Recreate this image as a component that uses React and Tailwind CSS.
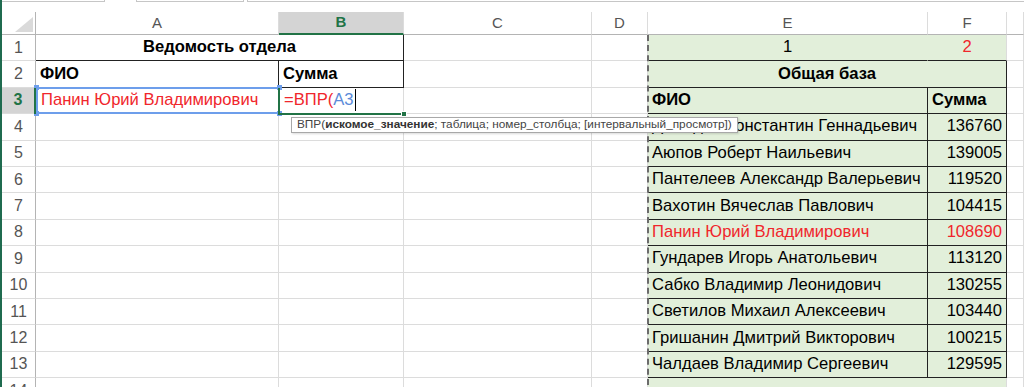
import React from 'react';

const cols = ['A', 'B', 'C', 'D', 'E', 'F', ''];

const base = [
    ['Демидов Константин Геннадьевич', '136760'],
    ['Аюпов Роберт Наильевич', '139005'],
    ['Пантелеев Александр Валерьевич', '119520'],
    ['Вахотин Вячеслав Павлович', '104415'],
    ['Панин Юрий Владимирович', '108690', true],
    ['Гундарев Игорь Анатольевич', '113120'],
    ['Сабко Владимир Леонидович', '130255'],
    ['Светилов Михаил Алексеевич', '103440'],
    ['Гришанин Дмитрий Викторович', '100215'],
    ['Чалдаев Владимир Сергеевич', '129595'],
];

// one spreadsheet cell; side colours are passed as full class names
const Cell = ({ children, r = 'border-r-[#dcdcdc]', b = 'border-b-[#dcdcdc]', className = '' }) => (
    <div className={`border-r border-b ${r} ${b} flex items-center whitespace-nowrap overflow-visible px-[4px] ${className}`}>
        {children}
    </div>
);

const RowHead = ({ n, active }) => (
    <div
        className={`flex items-center justify-center border-b border-b-[#dcdcdc] text-[16px] ${
            active
                ? 'bg-[#d4d4d4] border-r-2 border-r-[#217346] text-[#217346] font-bold'
                : 'bg-white border-r border-r-[#b4b4b4] text-[#555]'
        }`}
    >
        {n}
    </div>
);

const App = () => {
    const green = 'bg-[#e2efda]';
    const gR = 'border-r-[#e2efda]';
    const gB = 'border-b-[#e2efda]';
    const dR = 'border-r-[#222]';
    const dB = 'border-b-[#222]';

    return (
        <div className="relative flex w-[1024px] h-[387px] overflow-hidden bg-white text-black" style={{ fontFamily: '"Liberation Sans", Arial, sans-serif' }}>
            <div className="w-[2px] shrink-0 bg-[#1f6b4f]" />
            <div className="flex-1 flex flex-col">
                {/* formula bar remnants */}
                <div className="h-[12px] shrink-0 flex items-start">
                    <div className="w-[103px] h-[2px] border-b border-r border-[#c6c6c6]" />
                    <div className="w-[31px]" />
                    <div className="w-[108px] h-[2px] border-b border-x border-[#c6c6c6]" />
                    <div className="w-[3px]" />
                    <div className="flex-1 h-[2px] border-b border-l border-[#c6c6c6]" />
                </div>

                <div className="shrink-0 grid grid-cols-[34px_243px_125px_188px_56px_280px_79px_1fr] grid-rows-[23px_repeat(14,26.4px)] text-[16.6px]">
                    {/* header row */}
                    <div className="relative bg-white border-r border-b border-r-[#b4b4b4] border-b-[#b4b4b4]">
                        <svg className="absolute right-[2px] bottom-[2px]" width="18" height="15" viewBox="0 0 18 15">
                            <polygon points="18,0 18,15 0,15" fill="#dadada" />
                        </svg>
                    </div>
                    {cols.map((c) => (
                        <div
                            key={c || 'G'}
                            className={`flex items-center justify-center text-[15px] border-r border-r-[#dcdcdc] ${
                                c === 'B'
                                    ? 'bg-[#d4d4d4] border-b-2 border-b-[#217346] text-[#217346] font-bold'
                                    : 'bg-white border-b border-b-[#b4b4b4] text-[#555]'
                            }`}
                        >
                            {c}
                        </div>
                    ))}

                    {/* row 1 */}
                    <RowHead n={1} />
                    <Cell r={dR} b={dB} className="col-span-2 justify-center font-bold">Ведомость отдела</Cell>
                    <Cell />
                    <Cell />
                    <Cell r={gR} b={dB} className={`${green} justify-center`}>1</Cell>
                    <Cell b={dB} className={`${green} justify-center text-[#f0262c]`}>2</Cell>
                    <Cell />

                    {/* row 2 */}
                    <RowHead n={2} />
                    <Cell r={dR} b={dB} className="font-bold">ФИО</Cell>
                    <Cell r={dR} b={dB} className="font-bold">Сумма</Cell>
                    <Cell />
                    <Cell />
                    <Cell r={dR} b={dB} className={`${green} col-span-2 justify-center font-bold`}>Общая база</Cell>
                    <Cell />

                    {/* row 3 */}
                    <RowHead n={3} active />
                    <Cell className="text-[#f0262c] pl-[5px]">Панин Юрий Владимирович</Cell>
                    <Cell className="pl-[5px]">
                        <span className="text-[#f0262c]">=ВПР(</span>
                        <span className="text-[#5b8bd9]">A3</span>
                        <span className="inline-block w-[1px] h-[22px] bg-black ml-[1px]" />
                    </Cell>
                    <Cell />
                    <Cell />
                    <Cell r={dR} b={dB} className={`${green} font-bold`}>ФИО</Cell>
                    <Cell r={dR} b={dB} className={`${green} font-bold`}>Сумма</Cell>
                    <Cell />

                    {/* rows 4-13 */}
                    {base.map(([name, sum, red], i) => (
                        <React.Fragment key={name}>
                            <RowHead n={i + 4} />
                            <Cell />
                            <Cell />
                            <Cell />
                            <Cell />
                            <Cell r={dR} b={dB} className={`${green} ${red ? 'text-[#f0262c]' : ''}`}>{name}</Cell>
                            <Cell r={dR} b={dB} className={`${green} justify-end ${red ? 'text-[#f0262c]' : ''}`}>{sum}</Cell>
                            <Cell />
                        </React.Fragment>
                    ))}

                    {/* row 14 */}
                    <RowHead n={14} />
                    <Cell />
                    <Cell />
                    <Cell />
                    <Cell />
                    <Cell r={gR} b={gB} className={green} />
                    <Cell b={gB} className={green} />
                    <Cell />
                </div>
            </div>

            {/* reference frame around A3 */}
            <div className="absolute left-[36px] top-[87px] w-[244px] h-[27px] border-2 border-[#6d9eeb]">
                <div className="absolute -left-[4px] -top-[4px] w-[5px] h-[5px] bg-[#6d9eeb]" />
                <div className="absolute -right-[4px] -top-[4px] w-[5px] h-[5px] bg-[#6d9eeb]" />
                <div className="absolute -left-[4px] -bottom-[4px] w-[5px] h-[5px] bg-[#6d9eeb]" />
                <div className="absolute -right-[4px] -bottom-[4px] w-[5px] h-[5px] bg-[#6d9eeb]" />
            </div>
            <div className="absolute left-[34px] top-[88px] w-[2px] h-[26px] bg-[#217346]" />

            {/* active cell B3 */}
            <div className="absolute left-[278px] top-[88px] w-[2px] h-[27px] bg-[#217346]" />
            <div className="absolute left-[278px] top-[113px] w-[126px] h-[2px] bg-[#217346]" />
            <div className="absolute left-[401px] top-[111px] w-[6px] h-[6px] bg-[#217346] border border-white" />

            {/* copy range marquee */}
            <div className="absolute left-[647px] top-[35px] h-[360px] border-l-2 border-dashed border-[#6b6b6b]" />

            {/* function tooltip */}
            <div className="absolute left-[291px] top-[117px] h-[16px] px-[5px] flex items-center bg-white border border-[#a8a8a8] shadow-[1px_1px_2px_rgba(0,0,0,0.15)] text-[11.8px] text-[#444] whitespace-nowrap">
                ВПР(<b className="font-bold text-[#333]">искомое_значение</b>; таблица; номер_столбца; [интервальный_просмотр])
            </div>
        </div>
    );
};

export default App;
